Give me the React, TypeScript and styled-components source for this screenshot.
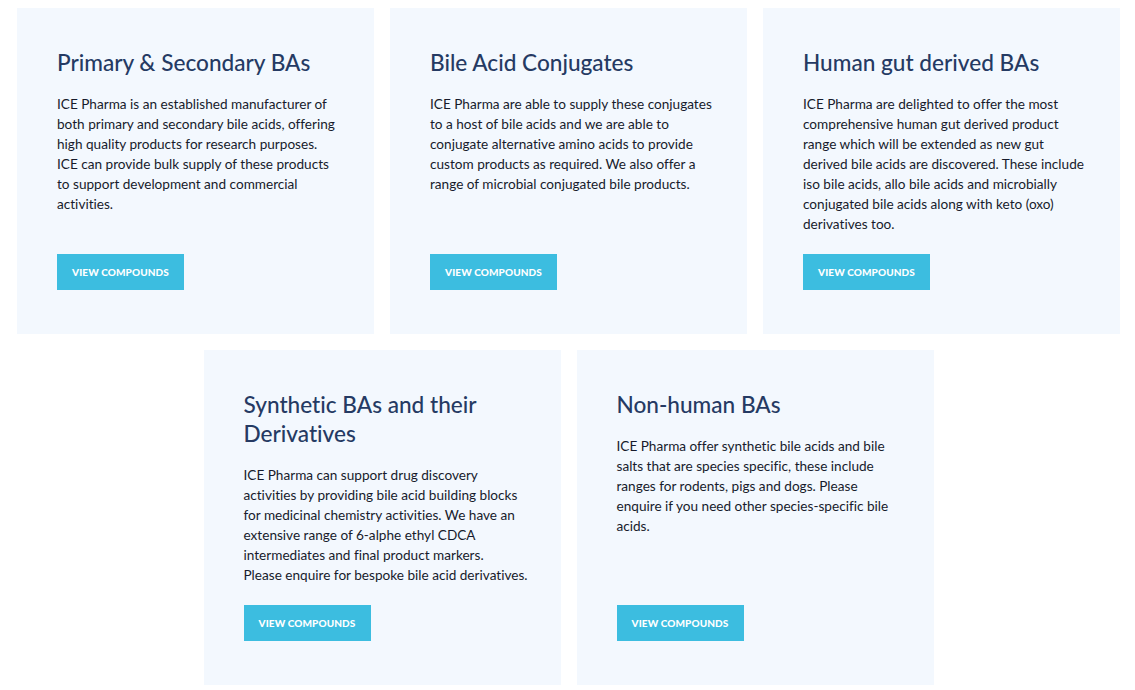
import React from "react";
import styled, { createGlobalStyle } from "styled-components";

const Global = createGlobalStyle`
  html, body { margin: 0; padding: 0; background: #ffffff; }
  body {
    font-family: "Lato", "Liberation Sans", sans-serif;
    font-variant-ligatures: none;
  }
`;

const Grid = styled.div`
  width: 1103px;
  margin: 8px 0 0 17px;
  display: flex;
  flex-wrap: wrap;
  justify-content: center;
  column-gap: 16px;
  row-gap: 16px;
`;

const Card = styled.section`
  width: 357px;
  box-sizing: border-box;
  background: #f3f8fe;
  padding: 40px 40px 44px 40px;
  display: flex;
  flex-direction: column;
`;

const Title = styled.h2`
  margin: 0;
  font-family: "Lato", "Liberation Sans", sans-serif;
  font-weight: 500;
  font-size: 22.6px;
  line-height: 29px;
  color: #253a63;
`;

const Body = styled.p`
  margin: 17px 0 0 0;
  font-size: 13.6px;
  line-height: 20px;
  color: #171b2c;
  white-space: nowrap;
`;

const Button = styled.a`
  margin-top: auto;
  align-self: flex-start;
  display: flex;
  align-items: center;
  justify-content: center;
  width: 127px;
  height: 36px;
  background: #3cbde0;
  color: #ffffff;
  font-family: "Lato", "Liberation Sans", sans-serif;
  font-weight: 900;
  font-size: 10px;
  letter-spacing: 0.1px;
  text-transform: uppercase;
  text-decoration: none;
`;

const Spacer = styled.div`
  height: 20px;
  flex-shrink: 0;
`;

const cards = [
  {
    title: ["Primary & Secondary BAs"],
    lines: [
      "ICE Pharma is an established manufacturer of",
      "both primary and secondary bile acids, offering",
      "high quality products for research purposes.",
      "ICE can provide bulk supply of these products",
      "to support development and commercial",
      "activities.",
    ],
  },
  {
    title: ["Bile Acid Conjugates"],
    lines: [
      "ICE Pharma are able to supply these conjugates",
      "to a host of bile acids and we are able to",
      "conjugate alternative amino acids to provide",
      "custom products as required. We also offer a",
      "range of microbial conjugated bile products.",
    ],
  },
  {
    title: ["Human gut derived BAs"],
    lines: [
      "ICE Pharma are delighted to offer the most",
      "comprehensive human gut derived product",
      "range which will be extended as new gut",
      "derived bile acids are discovered. These include",
      "iso bile acids, allo bile acids and microbially",
      "conjugated bile acids along with keto (oxo)",
      "derivatives too.",
    ],
  },
  {
    title: ["Synthetic BAs and their", "Derivatives"],
    lines: [
      "ICE Pharma can support drug discovery",
      "activities by providing bile acid building blocks",
      "for medicinal chemistry activities. We have an",
      "extensive range of 6-alphe ethyl CDCA",
      "intermediates and final product markers.",
      "Please enquire for bespoke bile acid derivatives.",
    ],
  },
  {
    title: ["Non-human BAs"],
    lines: [
      "ICE Pharma offer synthetic bile acids and bile",
      "salts that are species specific, these include",
      "ranges for rodents, pigs and dogs. Please",
      "enquire if you need other species-specific bile",
      "acids.",
    ],
  },
];

const Lines = ({ lines }: { lines: string[] }) => (
  <>
    {lines.map((l, i) => (
      <React.Fragment key={i}>
        {i > 0 && <br />}
        {l}
      </React.Fragment>
    ))}
  </>
);

export default function App() {
  return (
    <>
      <Global />
      <Grid>
        {cards.map((c) => (
          <Card key={c.title.join(" ")}>
            <Title>
              <Lines lines={c.title} />
            </Title>
            <Body>
              <Lines lines={c.lines} />
            </Body>
            <Spacer />
            <Button href="#">View Compounds</Button>
          </Card>
        ))}
      </Grid>
    </>
  );
}
